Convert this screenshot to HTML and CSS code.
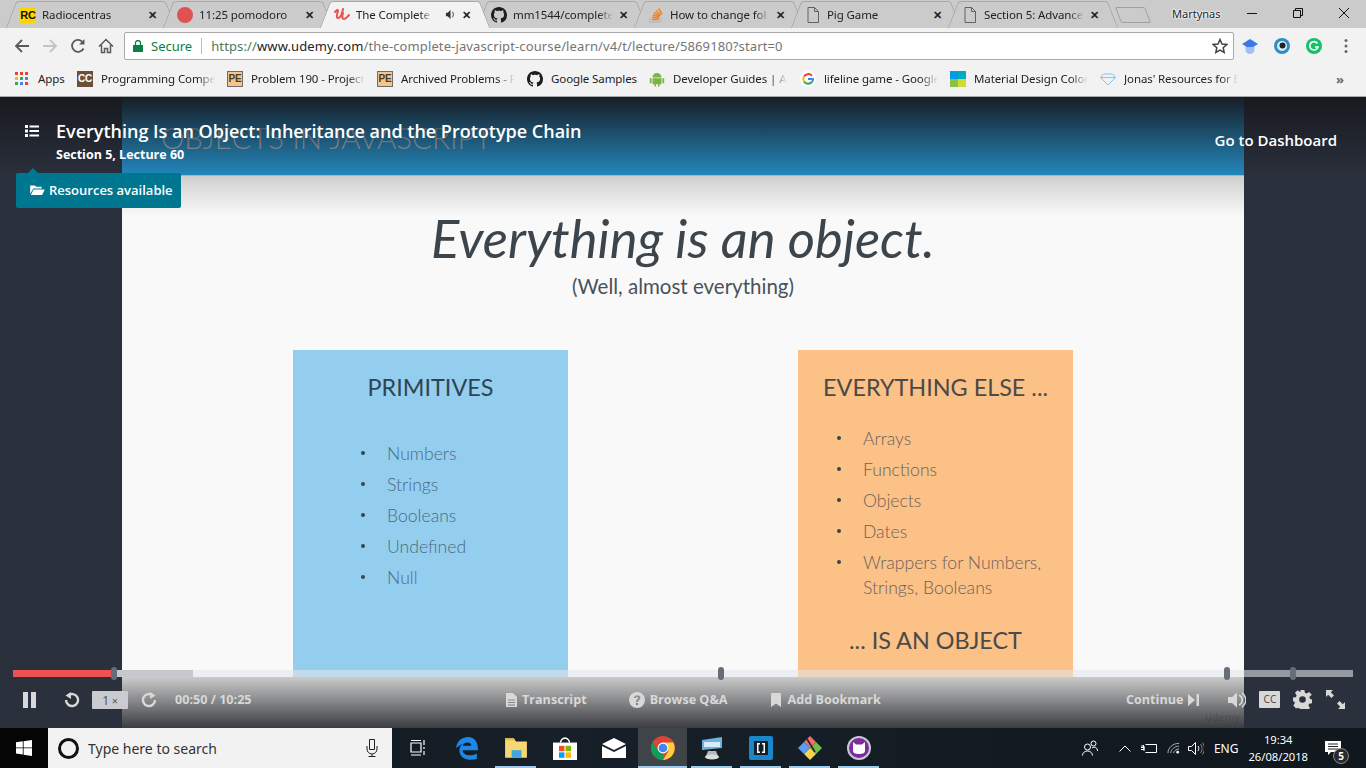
FILE: index.html
```html
<!DOCTYPE html>
<html lang="en">
<head>
  <meta charset="UTF-8" />
  <title>The Complete JavaScript Course</title>
  <link rel="stylesheet" href="styles.css">
</head>
<body>

<!-- tabs -->
<div class="tabstrip">
  <div class="tab">
    <span class="fav-rc">RC</span>
    <span class="tab-title">Radiocentras</span>
    <span class="tab-close">&#10005;</span>
  </div>
  <div class="tab">
    <svg class="fav" viewBox="0 0 16 16"><circle cx="8" cy="8" r="8" fill="#e05252"/></svg>
    <span class="tab-title">11:25 pomodoro</span>
    <span class="tab-close">&#10005;</span>
  </div>
  <div class="tab tab-active">
    <svg class="fav" viewBox="0 0 16 16"><path d="M1 5c2-2 3-3 3-1-1 3-2 7 0 7 2 0 4-4 5-9M9 6c-1 3-1 6 1 6 2 0 3-2 5-4" fill="none" stroke="#ec5252" stroke-width="2" stroke-linecap="round"/></svg>
    <span class="tab-title tab-title-short">The Complete J</span>
    <svg class="tab-sound" viewBox="0 0 12 12"><path d="M1 4h2l3-3v10L3 8H1z" fill="#333"/><path d="M8 3c1.500 1.500 1.500 4.500 0 6" fill="none" stroke="#333"/></svg>
    <span class="tab-close">&#10005;</span>
  </div>
  <div class="tab">
    <svg class="fav" viewBox="0 0 16 16"><path fill="#1b1f23" d="M8 0C3.580 0 0 3.580 0 8c0 3.540 2.290 6.530 5.470 7.590.4.070.55-.17.55-.38 0-.19-.01-.82-.01-1.490-2.010.37-2.530-.49-2.690-.94-.09-.23-.48-.94-.82-1.130-.28-.15-.68-.52-.01-.53.63-.01 1.080.58 1.230.82.72 1.210 1.870.87 2.330.66.07-.52.28-.87.51-1.070-1.780-.2-3.640-.89-3.640-3.950 0-.87.31-1.590.82-2.150-.08-.2-.36-1.020.08-2.120 0 0 .67-.21 2.200.82.64-.18 1.320-.27 2-.27.68 0 1.360.09 2 .27 1.530-1.040 2.200-.82 2.200-.82.44 1.100.16 1.920.08 2.120.51.56.82 1.270.82 2.150 0 3.070-1.870 3.750-3.650 3.950.29.25.54.73.54 1.480 0 1.070-.01 1.930-.01 2.200 0 .21.15.46.55.38A8.013 8.013 0 0016 8c0-4.420-3.580-8-8-8z"/></svg>
    <span class="tab-title">mm1544/complete</span>
    <span class="tab-close">&#10005;</span>
  </div>
  <div class="tab">
    <svg class="fav" viewBox="0 0 16 16"><path d="M2 10v5h11v-5" fill="none" stroke="#bcbbbb" stroke-width="1.400"/><path d="M4 12.500h7M4.200 10.300l7 .6M4.800 8l6.800 1.800M6 5.600l6 3.200M8 3.400l5 4.800M10.500 1.500l3.500 5.500" stroke="#f48024" stroke-width="1.400" fill="none"/></svg>
    <span class="tab-title">How to change fol</span>
    <span class="tab-close">&#10005;</span>
  </div>
  <div class="tab">
    <svg class="fav" viewBox="0 0 16 16"><path d="M3 .5h6.500L13.500 4.500v11h-10.500zM9.500 .5v4h4" fill="none" stroke="#5f6368"/></svg>
    <span class="tab-title">Pig Game</span>
    <span class="tab-close">&#10005;</span>
  </div>
  <div class="tab">
    <svg class="fav" viewBox="0 0 16 16"><path d="M3 .5h6.500L13.500 4.500v11h-10.500zM9.500 .5v4h4" fill="none" stroke="#5f6368"/></svg>
    <span class="tab-title">Section 5: Advanced</span>
    <span class="tab-close">&#10005;</span>
  </div>
  <div class="newtab"></div>
  <div class="profile">Martynas</div>
  <div class="winbtns">
    <svg viewBox="0 0 12 12"><path d="M1 6.500h10" stroke="#111" fill="none"/></svg>
    <svg viewBox="0 0 12 12"><path d="M1.500 3.500h7v7h-7zM3.500 3.500v-2h7v7h-2" stroke="#111" fill="none"/></svg>
    <svg viewBox="0 0 12 12"><path d="M1 1l10 10M11 1L1 11" stroke="#111" fill="none"/></svg>
  </div>
</div>

<!-- address bar -->
<div class="toolbar">
  <div class="nav">
    <svg viewBox="0 0 16 16"><path d="M15 8H2M8 2L2 8l6 6" fill="none" stroke="#5a5a5a" stroke-width="1.800"/></svg>
    <svg viewBox="0 0 16 16"><path d="M1 8h13M8 2l6 6-6 6" fill="none" stroke="#c4c4c4" stroke-width="1.800"/></svg>
    <svg viewBox="0 0 16 16"><path d="M13.500 10.500A6 6 0 1 1 13 4.500" fill="none" stroke="#5a5a5a" stroke-width="1.800"/><path d="M14.500 1v5.500H9z" fill="#5a5a5a"/></svg>
    <svg viewBox="0 0 16 16"><path d="M1 8.500L8 1.500l7 7M3.500 7v7.500h3v-4h3v4h3V7" fill="none" stroke="#5a5a5a" stroke-width="1.500"/></svg>
  </div>
  <div class="omnibox">
    <svg class="lock" viewBox="0 0 10 12"><path d="M0 5h10v7H0z" fill="#0b8043"/><path d="M2.500 5V3a2.500 2.500 0 0 1 5 0v2" fill="none" stroke="#0b8043" stroke-width="1.300"/></svg>
    <span class="secure">Secure</span>
    <span class="omni-sep"></span>
    <span class="url"><span class="url-scheme">https://</span><span class="url-host">www.udemy.com</span>/the-complete-javascript-course/learn/v4/t/lecture/5869180?start=0</span>
    <svg class="star" viewBox="0 0 16 16"><path d="M8 1.500l2 4.500 4.800.5-3.600 3.200 1 4.800L8 12.100l-4.200 2.400 1-4.800L1.200 6.500 6 6z" fill="none" stroke="#444" stroke-width="1.500"/></svg>
  </div>
  <div class="extensions">
    <svg viewBox="0 0 16 16"><path d="M8 1l8 5-8 5-8-5z" fill="#3b78e7"/><path d="M3.500 9h9v3a4.500 4 0 0 1-9 0z" fill="#9fc0f7"/></svg>
    <svg viewBox="0 0 16 16"><circle cx="8" cy="8" r="8" fill="#2e8fc4"/><circle cx="8" cy="8" r="5" fill="#d9eef7"/><circle cx="8.500" cy="7.500" r="3" fill="#222"/></svg>
    <svg viewBox="0 0 16 16"><circle cx="8" cy="8" r="8" fill="#15c26b"/><path d="M11.500 5.500A4.200 4.200 0 1 0 12 9H9" fill="none" stroke="#fff" stroke-width="1.600"/></svg>
    <svg class="menu-dots" viewBox="0 0 4 16"><circle cx="2" cy="2.500" r="1.500" fill="#666"/><circle cx="2" cy="8" r="1.500" fill="#666"/><circle cx="2" cy="13.500" r="1.500" fill="#666"/></svg>
  </div>
</div>

<!-- bookmarks -->
<div class="bookmarks">
  <div class="bm bm-apps">
    <svg class="bm-icon-apps" viewBox="0 0 13 13">
      <g fill="#ea4335"><rect width="3" height="3"/><rect x="5" width="3" height="3"/><rect x="10" width="3" height="3"/></g>
      <g fill="#fbbc05"><rect y="5" width="3" height="3"/></g><g fill="#34a853"><rect x="5" y="5" width="3" height="3"/></g><g fill="#4285f4"><rect x="10" y="5" width="3" height="3"/></g>
      <g fill="#34a853"><rect y="10" width="3" height="3"/></g><g fill="#4285f4"><rect x="5" y="10" width="3" height="3"/></g><g fill="#ea4335"><rect x="10" y="10" width="3" height="3"/></g>
    </svg>
    <span>Apps</span>
  </div>
  <div class="bm"><span class="bm-cc">CC</span><span class="bm-text">Programming Competition</span></div>
  <div class="bm"><span class="bm-pe">PE</span><span class="bm-text">Problem 190 - Project</span></div>
  <div class="bm"><span class="bm-pe">PE</span><span class="bm-text">Archived Problems - P</span></div>
  <div class="bm bm-short">
    <svg class="bm-icon" viewBox="0 0 16 16"><path fill="#1b1f23" d="M8 0C3.580 0 0 3.580 0 8c0 3.540 2.290 6.530 5.470 7.590.4.070.55-.17.55-.38 0-.19-.01-.82-.01-1.490-2.010.37-2.530-.49-2.690-.94-.09-.23-.48-.94-.82-1.130-.28-.15-.68-.52-.01-.53.63-.01 1.080.58 1.230.82.72 1.210 1.870.87 2.330.66.07-.52.28-.87.51-1.070-1.780-.2-3.640-.89-3.640-3.950 0-.87.31-1.590.82-2.150-.08-.2-.36-1.020.08-2.120 0 0 .67-.21 2.200.82.64-.18 1.320-.27 2-.27.68 0 1.360.09 2 .27 1.530-1.040 2.200-.82 2.200-.82.44 1.100.16 1.920.08 2.120.51.56.82 1.270.82 2.150 0 3.070-1.870 3.750-3.650 3.950.29.25.54.73.54 1.480 0 1.070-.01 1.930-.01 2.200 0 .21.15.46.55.38A8.013 8.013 0 0016 8c0-4.420-3.580-8-8-8z"/></svg>
    <span>Google Samples</span>
  </div>
  <div class="bm bm-wide">
    <svg class="bm-icon" viewBox="0 0 16 16"><path d="M3.500 6.500a4.500 4.500 0 0 1 9 0zM3.500 7.200h9v6h-2v2.300h-1.500v-2.300h-2v2.300H5.500v-2.300h-2zM0.800 7.200h1.800v5H0.800zM13.400 7.200h1.800v5h-1.800z" fill="#7cb342"/></svg>
    <span class="bm-text">Developer Guides | A</span>
  </div>
  <div class="bm">
    <svg class="bm-icon" viewBox="0 0 16 16"><circle cx="8" cy="8" r="8" fill="#fff"/><path d="M12 4.800A5 5 0 0 0 4 5.500" fill="none" stroke="#ea4335" stroke-width="2"/><path d="M4 5.500a5 5 0 0 0 0 5" fill="none" stroke="#fbbc05" stroke-width="2"/><path d="M4 10.500a5 5 0 0 0 8 .5" fill="none" stroke="#34a853" stroke-width="2"/><path d="M12 11a5 5 0 0 0 1-3H8" fill="none" stroke="#4285f4" stroke-width="2"/></svg>
    <span class="bm-text">lifeline game - Google</span>
  </div>
  <div class="bm">
    <svg class="bm-icon" viewBox="0 0 16 16"><rect width="8" height="8" fill="#039be5"/><rect x="8" width="8" height="8" fill="#00acc1"/><rect y="8" width="8" height="8" fill="#8bc34a"/><rect x="8" y="8" width="8" height="8" fill="#cddc39"/></svg>
    <span class="bm-text">Material Design Colors</span>
  </div>
  <div class="bm">
    <svg class="bm-icon" viewBox="0 0 16 16"><path d="M3.500 3h9l3 3.500L8 14 .5 6.500zM.5 6.500h15" fill="none" stroke="#7cc7f0"/></svg>
    <span class="bm-text">Jonas' Resources for E</span>
  </div>
  <span class="bm-more">&raquo;</span>
</div>

<!-- video player -->
<div class="player">
  <div class="slide">
    <div class="slide-band"><span class="slide-band-title">OBJECTS IN JAVASCRIPT</span></div>
    <div class="slide-body">
      <h2 class="slide-heading">Everything is an object.</h2>
      <p class="slide-sub">(Well, almost everything)</p>
      <div class="cards">
        <div class="card card-blue">
          <h3>PRIMITIVES</h3>
          <ul class="card-list">
            <li>Numbers</li>
            <li>Strings</li>
            <li>Booleans</li>
            <li>Undefined</li>
            <li>Null</li>
          </ul>
        </div>
        <div class="card card-orange">
          <h3>EVERYTHING ELSE ...</h3>
          <ul class="card-list">
            <li>Arrays</li>
            <li>Functions</li>
            <li>Objects</li>
            <li>Dates</li>
            <li>Wrappers for Numbers, Strings, Booleans</li>
          </ul>
          <h3 class="card-foot">... IS AN OBJECT</h3>
        </div>
      </div>
    </div>
    <div class="slide-foot"><span class="watermark">Udemy</span></div>
  </div>

  <div class="top-shade"></div>
  <div class="lecture-head">
    <svg class="lecture-menu" viewBox="0 0 14 12"><path d="M0 0h3v3H0zM0 4.500h3v3H0zM0 9h3v3H0zM4.500 .5H14v2H4.500zM4.500 5H14v2H4.500zM4.500 9.500H14v2H4.500z" fill="#fff"/></svg>
    <div>
      <div class="lecture-title">Everything Is an Object: Inheritance and the Prototype Chain</div>
      <div class="lecture-sub">Section 5, Lecture 60</div>
    </div>
    <a class="dashboard">Go to Dashboard</a>
  </div>
  <div class="resources">
    <svg viewBox="0 0 16 12"><path d="M0 11V1.500h5l1.500 1.500h6V5H3.500zM3.800 6H16l-3 6H.8z" fill="#fff"/></svg>
    Resources available
  </div>

  <div class="controls">
    <div class="progress">
      <div class="progress-buffer"></div>
      <div class="progress-played"></div>
      <span class="mark mark-1"></span>
      <span class="mark mark-2"></span>
      <span class="mark mark-3"></span>
      <span class="mark mark-4"></span>
    </div>
    <div class="ctl-row">
      <div class="ctl-left">
        <svg class="ic-pause" viewBox="0 0 13 16"><path d="M0 0h5v16H0zM8 0h5v16H8z"/></svg>
        <svg class="ic-back" viewBox="0 0 16 16"><path d="M4 3.500A6 6 0 1 1 2 8" fill="none" stroke="#d8d8d8" stroke-width="2.400"/><path d="M7 0v7L1.500 3.500z"/></svg>
        <span class="speed">1&thinsp;<small>&times;</small></span>
        <svg class="ic-fwd" viewBox="0 0 16 16"><path d="M12 3.500A6 6 0 1 0 14 8" fill="none" stroke="#d8d8d8" stroke-width="2.400"/><path d="M9 0v7l5.500-3.500z"/></svg>
        <span class="time">00:50 / 10:25</span>
      </div>
      <div class="ctl-mid">
        <span class="ctl-link">
          <svg class="ic-doc" viewBox="0 0 11 14"><path d="M0 0h7l4 4v10H0zM2 6.500v1h7v-1zM2 9v1h7V9zM2 11.500v1h7v-1z" fill-rule="evenodd"/></svg>Transcript
        </span>
        <span class="ctl-link">
          <svg class="ic-help" viewBox="0 0 16 16"><path d="M8 0a8 8 0 1 1 0 16A8 8 0 0 1 8 0zM7 11v2h2v-2zM5 6h2c0-1.500 2-1.500 2 0 0 1-2 1.500-2 4h2c0-2 2.500-2.500 2.500-4.200C11.500 2.500 5 2.500 5 6z" fill-rule="evenodd"/></svg>Browse Q&amp;A
        </span>
        <span class="ctl-link">
          <svg class="ic-mark" viewBox="0 0 10 14"><path d="M0 0h10v14L5 10.500 0 14z"/></svg>Add Bookmark
        </span>
      </div>
      <div class="ctl-right">
        <span class="ctl-link ctl-continue">Continue
          <svg class="ic-next" viewBox="0 0 11 12"><path d="M0 0l7 6-7 6zM8.500 0H11v12H8.500z"/></svg>
        </span>
        <svg class="ic-vol" viewBox="0 0 18 16"><path d="M0 5h4l5-4.500v15L4 11H0z"/><path d="M11 3a5.500 5.500 0 0 1 0 10M14 1a8.500 8.500 0 0 1 0 14" fill="none" stroke="#d8d8d8" stroke-width="1.600"/></svg>
        <span class="cc">CC</span>
        <svg class="ic-gear" viewBox="0 0 20 20"><path d="M8 0h4l.5 3 2 .8 2.500-1.700 2.800 2.800L17.100 7.400l.9 2.100 2 .5v4l-3 .4-.8 2 1.700 2.500-2.800 2.700-2.500-1.700-2 .8-.5 2H8l-.5-3-2-.8L3 19.100.3 16.300 2 13.800l-.9-2L0 12V8l3-.5.800-2L2.100 3 4.900.3l2.500 1.700 .6-.3zM10 6.500a3.500 3.500 0 1 0 0 7 3.500 3.500 0 0 0 0-7z" fill-rule="evenodd"/></svg>
        <svg class="ic-expand" viewBox="0 0 19 19"><path d="M0 0h7L4.800 2.200 8 5.400 5.400 8 2.200 4.800 0 7zM19 19h-7l2.200-2.200L11 13.600l2.600-2.600 3.200 3.200L19 12z"/></svg>
      </div>
    </div>
  </div>
</div>

<!-- windows taskbar -->
<div class="taskbar">
  <div class="start">
    <svg viewBox="0 0 16 16"><path d="M0 2.300l6.800-1v6.200H0zM7.600 1.200L16 0v7.500H7.600zM0 8.300h6.800v6.300l-6.800-1zM7.600 8.300H16V16l-8.400-1.200z" fill="#fff"/></svg>
  </div>
  <div class="searchbox">
    <span class="cortana"></span>
    <span class="search-text">Type here to search</span>
    <svg class="mic" viewBox="0 0 12 18"><path d="M3.500 .5h5v10h-5zM1 7v3a5 5 0 0 0 10 0V7M6 15v2.500M2.500 17.500h7" fill="none" stroke="#222"/></svg>
  </div>
  <div class="task-icons">
    <span class="task task-view">
      <svg viewBox="0 0 16 16"><path d="M1 3h10v9H1zM1 .5h10M1 15h10M14 0v5M14 7v2M14 11v4" fill="none" stroke="#fff" stroke-width="1.200"/></svg>
    </span>
    <span class="task">
      <svg viewBox="0 0 22 22"><path d="M1 11C2 4 7 1 12 1c6 0 9 5 9 11v1H7c0 5 8 6 13 3v5c-7 2-16 0-16-8 0-3 2-5 3-6-2 1-5 3-6 4zM7 9h8c0-4-7-4-8 0z" fill="#1e88e5"/></svg>
    </span>
    <span class="task task-open">
      <svg viewBox="0 0 22 20"><path d="M1 1h8l2 3h10v15H1z" fill="#f6d776"/><path d="M1 1h8l1 2H1z" fill="#e8b93f"/><path d="M7 12h9v7H7z" fill="#3fa7dc"/></svg>
    </span>
    <span class="task">
      <svg viewBox="0 0 22 22"><path d="M0 6h22v16H0z" fill="#fff"/><path d="M7 6a4 4 0 0 1 8 0" fill="none" stroke="#fff" stroke-width="1.500"/><rect x="5.500" y="9" width="5" height="5" fill="#f25022"/><rect x="11.500" y="9" width="5" height="5" fill="#7fba00"/><rect x="5.500" y="15" width="5" height="5" fill="#00a4ef"/><rect x="11.500" y="15" width="5" height="5" fill="#ffb900"/></svg>
    </span>
    <span class="task">
      <svg viewBox="0 0 24 20"><path d="M0 6L12 0l12 6-12 6zM0 8l12 6 12-6v12H0z" fill="#fff"/></svg>
    </span>
    <span class="task task-open task-active">
      <svg viewBox="0 0 22 22"><circle cx="11" cy="11" r="11" fill="#db4437"/><path d="M11 22A11 11 0 0 1 1.500 5.500L7 14l4 3z" fill="#0f9d58"/><path d="M11 6h9.500A11 11 0 0 1 11 22l5-8z" fill="#ffcd40"/><circle cx="11" cy="11" r="5" fill="#fff"/><circle cx="11" cy="11" r="4" fill="#4285f4"/></svg>
    </span>
    <span class="task task-open">
      <svg viewBox="0 0 24 24"><path d="M2 4l20-3v11L2 14z" fill="#6fb3dc"/><path d="M4 6h16v5H4z" fill="#d7ecf8"/><path d="M8 15h8l2 5H6z" fill="#b8b8b8"/><ellipse cx="12" cy="21" rx="7" ry="2.500" fill="#ddd"/></svg>
    </span>
    <span class="task task-open">
      <svg viewBox="0 0 24 24"><rect width="24" height="24" rx="2" fill="#1b87c9"/><path d="M5 5h14v14H5z" fill="#15202b"/><path d="M8 7v10h3v-1.500H9.500v-7H11V7zM16 7v10h-3v-1.500h1.500v-7H13V7z" fill="#fff"/></svg>
    </span>
    <span class="task task-open">
      <svg viewBox="0 0 24 24"><path d="M12 0l6 6-6 6-6-6z" fill="#f26d6d"/><path d="M18 6l6 6-6 6-6-6z" fill="#6cc04a"/><path d="M12 12l6 6-6 6-6-6z" fill="#f6d44d"/><path d="M6 6l6 6-6 6-6-6z" fill="#5b9cf4"/><path d="M9 3l8 13" stroke="#222" stroke-width="1.500"/></svg>
    </span>
    <span class="task task-open">
      <svg viewBox="0 0 24 24"><circle cx="12" cy="12" r="11" fill="#7b2d9b" stroke="#c9c9d4" stroke-width="2"/><path d="M6 6l3 2.500h6L18 6v9c0 2-2 3-6 3s-6-1-6-3z" fill="#fff"/></svg>
    </span>
  </div>
  <div class="tray">
    <svg class="tray-people" viewBox="0 0 16 16"><circle cx="5.500" cy="7" r="3" fill="none" stroke="#fff"/><circle cx="11.500" cy="3.500" r="2.500" fill="none" stroke="#fff"/><path d="M.5 15.500c0-6 10-6 10 0M10 8c3-2 5.500 0 5.500 3" fill="none" stroke="#fff"/></svg>
    <svg class="tray-caret" viewBox="0 0 12 7"><path d="M.5 6.500L6 1l5.500 5.500" fill="none" stroke="#fff"/></svg>
    <svg class="tray-batt" viewBox="0 0 16 11"><path d="M4.500 1.500h11v8h-11M3 3v5M0 4.500h3v2H0M1 2v2.500M2.500 2v2.500" fill="none" stroke="#fff"/></svg>
    <svg class="tray-wifi" viewBox="0 0 14 12"><path d="M1 11.500C1 6 6 1 13 1M4 11.500C4 8 8 4 13 4M7 11.500c0-2 3-4.500 6-4.500" fill="none" stroke="#bbb"/><circle cx="11.500" cy="10.500" r="1.500" fill="#fff"/></svg>
    <svg class="tray-vol" viewBox="0 0 16 13"><path d="M.5 4.500h3l4-4v12l-4-4h-3zM10 4c1 1.500 1 3.500 0 5" fill="none" stroke="#fff"/><path d="M12.500 2c2 2.500 2 6.500 0 9M14.500 .5c2.500 3.500 2.500 8.500 0 12" fill="none" stroke="#888"/></svg>
    <span class="tray-lang">ENG</span>
    <div class="clock"><div>19:34</div><div>26/08/2018</div></div>
    <div class="notify">
      <svg viewBox="0 0 16 15"><path d="M0 0h16v11H6l-3 3v-3H0z" fill="#fff"/><path d="M3 3h10M3 5.500h10M3 8h10" stroke="#222"/></svg>
      <span class="notify-count">5</span>
    </div>
  </div>
</div>

</body>
</html>
```

FILE: styles.css
```css
* {
  box-sizing: border-box;
}
html, body {
  margin: 0;
  height: 768px;
  overflow: hidden;
}
body {
  width: 1366px;
  display: flex;
  flex-direction: column;
  font-family: "Noto Sans", sans-serif;
  color: #222;
  background: #2a303c;
}
svg {
  display: block;
  flex: none;
}

/* tabs */
.tabstrip {
  height: 28px;
  flex: none;
  display: flex;
  align-items: stretch;
  padding-left: 6px;
  background: #cbcbcb;
  position: relative;
}
.tab {
  width: 169px;
  margin-right: -12px;
  padding: 1px 18px 0 14px;
  display: flex;
  align-items: center;
  position: relative;
  font-size: 11.500px;
  letter-spacing: -.1px;
  z-index: 1;
}
.tab::before, .tab::after {
  content: "";
  position: absolute;
  top: 1px;
  bottom: 0;
  width: 50%;
  background: #cbcbcb;
  border-top: 1px solid #a8a8a8;
  z-index: -1;
}
.tab::before {
  left: 5px;
  border-left: 1px solid #a0a0a0;
  transform: skewX(-21deg);
  border-top-left-radius: 3px;
}
.tab::after {
  right: 5px;
  border-right: 1px solid #a0a0a0;
  transform: skewX(21deg);
  border-top-right-radius: 3px;
}
.tab-active {
  z-index: 2;
}
.tab-active::before, .tab-active::after {
  background: #f2f2f2;
}
.fav {
  width: 16px;
  height: 16px;
}
.fav-rc {
  width: 16px;
  height: 16px;
  flex: none;
  background: #ffd500;
  color: #111;
  font: bold 11px/16px "Liberation Sans", sans-serif;
  text-align: center;
}
.tab-title {
  margin-left: 6px;
  width: 100px;
  flex: none;
  overflow: hidden;
  white-space: nowrap;
  -webkit-mask-image: linear-gradient(to right, #000 85%, transparent);
  mask-image: linear-gradient(to right, #000 85%, transparent);
}
.tab-title-short {
  width: 76px;
}
.tab-sound {
  width: 11px;
  height: 11px;
  margin-left: 13px;
}
.tab-close {
  margin-left: auto;
  font-size: 11px;
  font-weight: 700;
  color: #222;
}
.newtab {
  width: 30px;
  height: 16px;
  margin: 7px 0 0 13px;
  border: 1px solid #a0a0a0;
  border-radius: 2px;
  transform: skewX(21deg);
  flex: none;
}
.profile {
  margin: 6px 0 0 24px;
  font-size: 11px;
  line-height: 16px;
  color: #222;
  text-shadow: 0 0 2px #fff, 0 0 2px #fff, 0 0 3px #fff;
}
.winbtns {
  display: flex;
  gap: 34px;
  margin: 7px 0 0 25px;
}
.winbtns svg {
  width: 12px;
  height: 12px;
}

/* address bar */
.toolbar {
  height: 36px;
  flex: none;
  display: flex;
  align-items: center;
  background: #f2f2f2;
}
.nav {
  display: flex;
  gap: 12px;
  padding-left: 14px;
  width: 124px;
}
.nav svg {
  width: 16px;
  height: 16px;
}
.omnibox {
  width: 1110px;
  height: 28px;
  margin-top: -1px;
  display: flex;
  align-items: center;
  padding: 0 5px 0 8px;
  background: #fff;
  border: 1px solid #a9a9a9;
  border-radius: 2px;
  font-size: 13px;
}
.lock {
  width: 10px;
  height: 12px;
}
.secure {
  margin-left: 8px;
  color: #0b8043;
}
.omni-sep {
  width: 1px;
  height: 16px;
  margin: 0 9px;
  background: #bbb;
}
.url {
  color: #757575;
  white-space: nowrap;
  letter-spacing: .12px;
}
.url-scheme {
  color: #4d7a5c;
}
.url-host {
  color: #222;
}
.star {
  width: 16px;
  height: 16px;
  margin-left: auto;
}
.extensions {
  display: flex;
  align-items: center;
  gap: 16px;
  padding-left: 8px;
}
.extensions svg {
  width: 16px;
  height: 16px;
}
.extensions .menu-dots {
  width: 4px;
  margin-left: 6px;
}

/* bookmarks */
.bookmarks {
  height: 33px;
  flex: none;
  display: flex;
  align-items: center;
  padding: 0 0 3px 15px;
  background: #f2f2f2;
  border-bottom: 1px solid #a8a8a8;
  font-size: 11.500px;
  letter-spacing: -.1px;
  white-space: nowrap;
}
.bm {
  width: 150px;
  flex: none;
  display: flex;
  align-items: center;
}
.bm-apps {
  width: 62px;
}
.bm-apps span {
  margin-left: 10px;
}
.bm-short {
  width: 122px;
}
.bm-wide {
  width: 151px;
}
.bm-icon-apps {
  width: 13px;
  height: 13px;
}
.bm-icon {
  width: 16px;
  height: 16px;
  margin-right: 8px;
}
.bm-text {
  width: 114px;
  overflow: hidden;
  -webkit-mask-image: linear-gradient(to right, #000 85%, transparent);
  mask-image: linear-gradient(to right, #000 85%, transparent);
}
.bm-cc, .bm-pe {
  width: 16px;
  height: 16px;
  flex: none;
  margin-right: 8px;
  text-align: center;
  font: bold 10px/16px "Liberation Sans", sans-serif;
}
.bm-cc {
  background: #6b4f3a;
  color: #fff;
}
.bm-pe {
  background: #f4c68a;
  color: #4a3a2a;
  border: 1px solid #6d6d6d;
  line-height: 14px;
}
.bm-more {
  margin-left: 86px;
  font-size: 13px;
  color: #666;
  font-weight: 700;
}

/* player */
.player {
  flex: 1;
  position: relative;
  overflow: hidden;
  background: #2a303c;
}
.slide {
  width: 1122px;
  height: 100%;
  margin-left: 122px;
  display: flex;
  flex-direction: column;
}
.slide-band {
  height: 79px;
  flex: none;
  padding: 21px 0 0 39px;
  background: #2389bf;
  border-bottom: 1px solid #8fc0da;
}
.slide-band-title {
  font: 300 29.500px/40px Lato, sans-serif;
  color: #b0b8bc;
  white-space: nowrap;
}
.slide-body {
  flex: 1;
  overflow: hidden;
  background: linear-gradient(#cfcfd0, #f9f9fa 40px);
}
.slide-heading {
  margin: 27px 0 0;
  font: italic 400 52.600px/70px Lato, sans-serif;
  color: #3c444c;
  text-align: center;
}
.slide-sub {
  margin: 0;
  font: 20.500px/26px Lato, sans-serif;
  color: #4a5258;
  text-align: center;
}
.cards {
  display: flex;
  gap: 230px;
  padding-left: 171px;
  margin-top: 51px;
}
.card {
  width: 275px;
  height: 400px;
  padding: 22px 25px 0;
}
.card h3 {
  margin: 0;
  font: 400 23.400px/30px Lato, sans-serif;
  text-align: center;
  white-space: nowrap;
}
.card-blue {
  background: #93ceef;
}
.card-blue h3 {
  color: #2f4452;
}
.card-orange {
  background: #fbc187;
}
.card-orange h3 {
  color: #4a4a48;
}
.card-list {
  margin: 0;
  padding: 0;
  list-style: none;
  font: 300 17.600px/25px Lato, sans-serif;
  color: #4d6a80;
}
.card-list li {
  position: relative;
  margin-top: 6px;
}
.card-list li::before {
  content: "";
  position: absolute;
  width: 4px;
  height: 4px;
  border-radius: 50%;
  background: #36454f;
  top: 10px;
  left: -26px;
}
.card-blue .card-list {
  margin: 39px 0 0 69px;
}
.card-orange .card-list {
  margin: 24px 0 0 40px;
  color: #6b625a;
}
.card-foot {
  margin-top: 25px !important;
}
.slide-foot {
  height: 51px;
  flex: none;
  position: relative;
  background: linear-gradient(#cbcbcb, #3a3c40);
}
.watermark {
  position: absolute;
  right: 4px;
  bottom: 4px;
  font-size: 10px;
  font-weight: 700;
  color: rgba(0, 0, 0, .12);
}

/* lecture header over the video */
.top-shade {
  position: absolute;
  top: 0;
  left: 0;
  right: 0;
  height: 80px;
  background: linear-gradient(rgba(22, 24, 30, .95), rgba(22, 24, 30, 0));
}
.lecture-head {
  position: absolute;
  top: 0;
  left: 25px;
  right: 29px;
  height: 76px;
  display: flex;
  align-items: flex-start;
  color: #fff;
}
.lecture-menu {
  width: 14px;
  height: 12px;
  margin: 28px 17px 0 0;
}
.lecture-title {
  margin-top: 22px;
  font: 600 18px/24px "Open Sans", sans-serif;
  white-space: nowrap;
}
.lecture-sub {
  font: 700 12.500px/24px "Open Sans", sans-serif;
}
.dashboard {
  margin: 32px 0 0 auto;
  font: 600 15px/22px "Open Sans", sans-serif;
}
.resources {
  position: absolute;
  top: 76px;
  left: 16px;
  width: 165px;
  height: 35px;
  display: flex;
  align-items: center;
  gap: 4px;
  padding: 0 0 2px 14px;
  background: #007791;
  border-radius: 2px;
  color: #fff;
  font: 600 13px/16px "Open Sans", sans-serif;
}
.resources::before {
  content: "";
  position: absolute;
  top: -5px;
  left: 12px;
  border: 5px solid transparent;
  border-top: 0;
  border-bottom-color: #007791;
}
.resources svg {
  width: 15px;
  height: 11px;
}

/* player controls */
.controls {
  position: absolute;
  left: 0;
  right: 0;
  bottom: 0;
  height: 58px;
}
.progress {
  position: absolute;
  top: 0;
  left: 13px;
  right: 13px;
  height: 7px;
  background: rgba(228, 230, 235, .58);
}
.progress-played {
  position: absolute;
  top: 0;
  bottom: 0;
  left: 0;
  width: 101px;
  background: #ec5252;
}
.progress-buffer {
  position: absolute;
  top: 0;
  bottom: 0;
  left: 0;
  width: 180px;
  background: #c6c8cc;
}
.mark {
  position: absolute;
  top: -3px;
  width: 6px;
  height: 13px;
  border-radius: 3px;
  background: #666c78;
}
.mark-1 {
  left: 98px;
}
.mark-2 {
  left: 705px;
}
.mark-3 {
  left: 1211px;
}
.mark-4 {
  left: 1277px;
}
.ctl-row {
  position: absolute;
  top: 20px;
  left: 23px;
  right: 20px;
  height: 18px;
  display: grid;
  grid-template-columns: 483px 620px 1fr;
  align-items: center;
  color: #d8d8d8;
  font: 700 12.600px/18px "Open Sans", sans-serif;
}
.ctl-row svg {
  fill: #d8d8d8;
}
.ctl-left, .ctl-mid, .ctl-right {
  display: flex;
  align-items: center;
}
.ic-pause {
  width: 13px;
  height: 16px;
}
.ic-back {
  width: 16px;
  height: 16px;
  margin-left: 28px;
}
.speed {
  width: 36px;
  height: 18px;
  margin-left: 12px;
  border-radius: 1px;
  background: #c9cbd0;
  color: #555;
  font: 400 13px/18px "Open Sans", sans-serif;
  text-align: center;
}
.speed small {
  font-size: 11px;
}
.ic-fwd {
  width: 16px;
  height: 16px;
  margin-left: 13px;
}
.time {
  margin-left: 18px;
  white-space: nowrap;
}
.ctl-link {
  display: flex;
  align-items: center;
  white-space: nowrap;
}
.ic-doc {
  width: 11px;
  height: 14px;
  margin-right: 5px;
}
.ic-help {
  width: 16px;
  height: 16px;
  margin: 0 5px 0 42px;
}
.ic-mark {
  width: 10px;
  height: 14px;
  margin: 0 7px 0 43px;
}
.ctl-continue {
  gap: 5px;
}
.ic-next {
  width: 11px;
  height: 12px;
}
.ic-vol {
  width: 18px;
  height: 16px;
  margin-left: 29px;
}
.cc {
  width: 21px;
  height: 17px;
  margin-left: 13px;
  border-radius: 1px;
  background: #d8d8d8;
  color: #444;
  font: 400 10px/17px "Open Sans", sans-serif;
  text-align: center;
}
.ic-gear {
  width: 19px;
  height: 19px;
  margin-left: 13px;
}
.ic-expand {
  width: 19px;
  height: 19px;
  margin-left: 14px;
}

/* taskbar */
.taskbar {
  height: 40px;
  flex: none;
  display: flex;
  align-items: stretch;
  background: linear-gradient(90deg, #0b1116, #172029 40%, #10171d);
  color: #fff;
}
.start {
  width: 48px;
  display: flex;
  align-items: center;
  justify-content: center;
  background: #050505;
}
.start svg {
  width: 16px;
  height: 16px;
}
.searchbox {
  width: 344px;
  display: flex;
  align-items: center;
  padding: 0 14px 0 10px;
  background: #f2f2f2;
  color: #333;
  font-size: 14px;
}
.cortana {
  width: 21px;
  height: 21px;
  border-radius: 50%;
  border: 3px solid #111;
  flex: none;
}
.search-text {
  margin-left: 9px;
}
.mic {
  width: 12px;
  height: 18px;
  margin-left: auto;
}
.task-icons {
  display: flex;
  margin-left: 1px;
}
.task {
  width: 49px;
  display: flex;
  align-items: center;
  justify-content: center;
  position: relative;
}
.task svg {
  width: 24px;
  height: 24px;
}
.task-view svg {
  width: 16px;
  height: 16px;
}
.task-open::after {
  content: "";
  position: absolute;
  left: 4px;
  right: 4px;
  bottom: 0;
  height: 2px;
  background: #9ccbec;
}
.task-active {
  background: #3f4449;
}
.task-active::after {
  left: 0;
  right: 0;
}
.tray {
  margin-left: auto;
  display: flex;
  align-items: center;
  font-size: 12px;
}
.tray-people {
  width: 16px;
  height: 16px;
}
.tray-caret {
  width: 12px;
  height: 7px;
  margin-left: 21px;
}
.tray-batt {
  width: 16px;
  height: 11px;
  margin-left: 10px;
}
.tray-wifi {
  width: 13px;
  height: 12px;
  margin-left: 10px;
}
.tray-vol {
  width: 16px;
  height: 13px;
  margin-left: 8px;
}
.tray-lang {
  margin-left: 10px;
}
.clock {
  margin-left: 10px;
  text-align: center;
  line-height: 17px;
  font-size: 11.200px;
}
.notify {
  position: relative;
  width: 16px;
  height: 15px;
  margin: 0 25px 0 17px;
}
.notify svg {
  width: 16px;
  height: 15px;
}
.notify-count {
  position: absolute;
  left: 8px;
  top: 7px;
  width: 16px;
  height: 16px;
  border-radius: 50%;
  border: 1px solid #888;
  background: #2a2a2a;
  font-size: 10px;
  font-weight: 700;
  line-height: 14px;
  text-align: center;
}
```
